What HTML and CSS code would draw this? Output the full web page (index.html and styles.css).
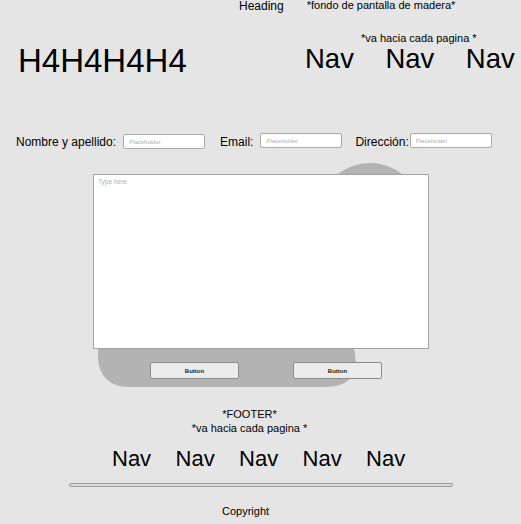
FILE: index.html
```html
<!DOCTYPE html>
<html lang="es">
<head>
<meta charset="utf-8">
<title>Wireframe</title>
<link rel="stylesheet" href="styles.css">
</head>
<body>
<header class="top">
  <div class="brand"><h1 class="brand-title">H4H4H4H4</h1></div>
  <div class="top-right">
    <div class="top-row">
      <span class="heading">Heading</span>
      <span class="note">*fondo de pantalla de madera*</span>
    </div>
    <div class="top-note">*va hacia cada pagina *</div>
    <nav class="top-nav">
      <a class="nav-big">Nav</a>
      <a class="nav-big">Nav</a>
      <a class="nav-big">Nav</a>
    </nav>
  </div>
</header>

<form class="fields">
  <label class="lbl lbl-name">Nombre y apellido:</label>
  <input class="field field-name" type="text" placeholder="Placeholder">
  <label class="lbl lbl-email">Email:</label>
  <input class="field field-email" type="text" placeholder="Placeholder">
  <label class="lbl lbl-dir">Dirección:</label>
  <input class="field field-dir" type="text" placeholder="Placeholder">
</form>

<section class="compose">
  <svg class="blob" width="521" height="240" viewBox="0 149 521 240" aria-hidden="true">
    <circle cx="370" cy="215" r="52" fill="#b3b3b3"/>
    <path d="M98 330 L349 330 C353 345 357 355 355 368 C352 382 342 387 322 387 L128 387 C110 387 98 375 98 357 Z" fill="#b3b3b3"/>
  </svg>
  <textarea class="message" placeholder="Type here"></textarea>
  <div class="actions">
    <button class="btn btn-one" type="button">Button</button>
    <button class="btn btn-two" type="button">Button</button>
  </div>
</section>

<footer class="foot">
  <p class="foot-line">*FOOTER*</p>
  <p class="foot-line">*va hacia cada pagina *</p>
  <nav class="foot-nav">
    <a class="nav-small">Nav</a>
    <a class="nav-small">Nav</a>
    <a class="nav-small">Nav</a>
    <a class="nav-small">Nav</a>
    <a class="nav-small">Nav</a>
  </nav>
  <div class="rule"></div>
  <p class="copy">Copyright</p>
</footer>
</body>
</html>
```
FILE: styles.css
```css
html, body {
  margin: 0;
  padding: 0;
}
body {
  background: #e5e5e5;
  color: #000;
  font-family: "Liberation Sans", Arial, sans-serif;
  width: 521px;
  height: 524px;
  overflow: hidden;
}

.top {
  display: flex;
  align-items: flex-start;
  height: 77px;
}
.brand {
  width: 221px;
  padding-left: 18px;
}
.brand-title {
  margin: 44px 0 0 0;
  font-size: 33px;
  line-height: 33px;
  font-weight: normal;
}
.top-right {
  display: flex;
  flex-direction: column;
}
.top-row {
  display: flex;
  align-items: flex-start;
  height: 12px;
}
.heading {
  font-size: 12px;
  line-height: 12px;
}
.note {
  font-size: 11px;
  line-height: 11px;
  margin-left: 23px;
}
.top-note {
  font-size: 11px;
  line-height: 13px;
  margin-top: 20px;
  padding-left: 122px;
}
.top-nav {
  display: flex;
  gap: 31.5px;
  padding-left: 66px;
  height: 28px;
}
.nav-big {
  font-size: 27.5px;
  line-height: 28px;
}

.fields {
  display: flex;
  align-items: flex-start;
  margin: 56px 0 0 0;
  padding-left: 16px;
  height: 16px;
}
.lbl {
  font-size: 12px;
  line-height: 14px;
  margin-top: 2px;
}
.field {
  box-sizing: border-box;
  width: 82px;
  height: 15px;
  margin: 0;
  padding: 0 0 0 5px;
  border: 1px solid #a9a9a9;
  border-radius: 2px;
  background: #fff;
  font-family: "Liberation Sans", Arial, sans-serif;
  font-size: 6px;
  outline: none;
}
.field::placeholder {
  color: #b0b0b0;
}
.field-name {
  margin-left: 7px;
  margin-top: 1px;
}
.lbl-email {
  margin-left: 15px;
}
.field-email {
  margin-left: 7px;
}
.lbl-dir {
  margin-left: 13px;
}
.field-dir {
  margin-left: 1px;
}

.compose {
  position: relative;
  padding-top: 25px;
}
.blob {
  position: absolute;
  left: 0;
  top: 0;
  z-index: 0;
}
.message {
  position: relative;
  z-index: 1;
  display: block;
  box-sizing: border-box;
  width: 336px;
  height: 175px;
  margin: 0 0 0 93px;
  padding: 3px 4px;
  border: 1px solid #a3a3a3;
  background: #fff;
  resize: none;
  font-family: "Liberation Sans", Arial, sans-serif;
  font-size: 6.5px;
  outline: none;
}
.message::placeholder {
  color: #b0b0b0;
}
.actions {
  position: relative;
  z-index: 1;
  display: flex;
  margin-top: 13px;
  height: 17px;
}
.btn {
  box-sizing: border-box;
  width: 89px;
  height: 17px;
  margin: 0;
  padding: 0;
  border: 1px solid #8c8c8c;
  border-radius: 2px;
  background: #ebebeb;
  color: #1a1a1a;
  font-family: "Liberation Sans", Arial, sans-serif;
  font-size: 6px;
  font-weight: bold;
}
.btn-one {
  margin-left: 150px;
}
.btn-two {
  margin-left: 54px;
}

.foot {
  padding-top: 28px;
}
.foot-line {
  margin: 0;
  width: 499px;
  text-align: center;
  font-size: 11px;
  line-height: 14px;
}
.foot-nav {
  display: flex;
  gap: 24.4px;
  margin-top: 12px;
  padding-left: 112px;
  height: 23px;
}
.nav-small {
  font-size: 22px;
  line-height: 23px;
}
.rule {
  box-sizing: border-box;
  width: 384px;
  height: 4px;
  margin: 13px 0 0 69px;
  border: 1px solid #9a9a9a;
  border-radius: 2px;
  background: #dcdcdc;
}
.copy {
  margin: 17px 0 0 0;
  padding-left: 222px;
  font-size: 11px;
  line-height: 14px;
}
```
